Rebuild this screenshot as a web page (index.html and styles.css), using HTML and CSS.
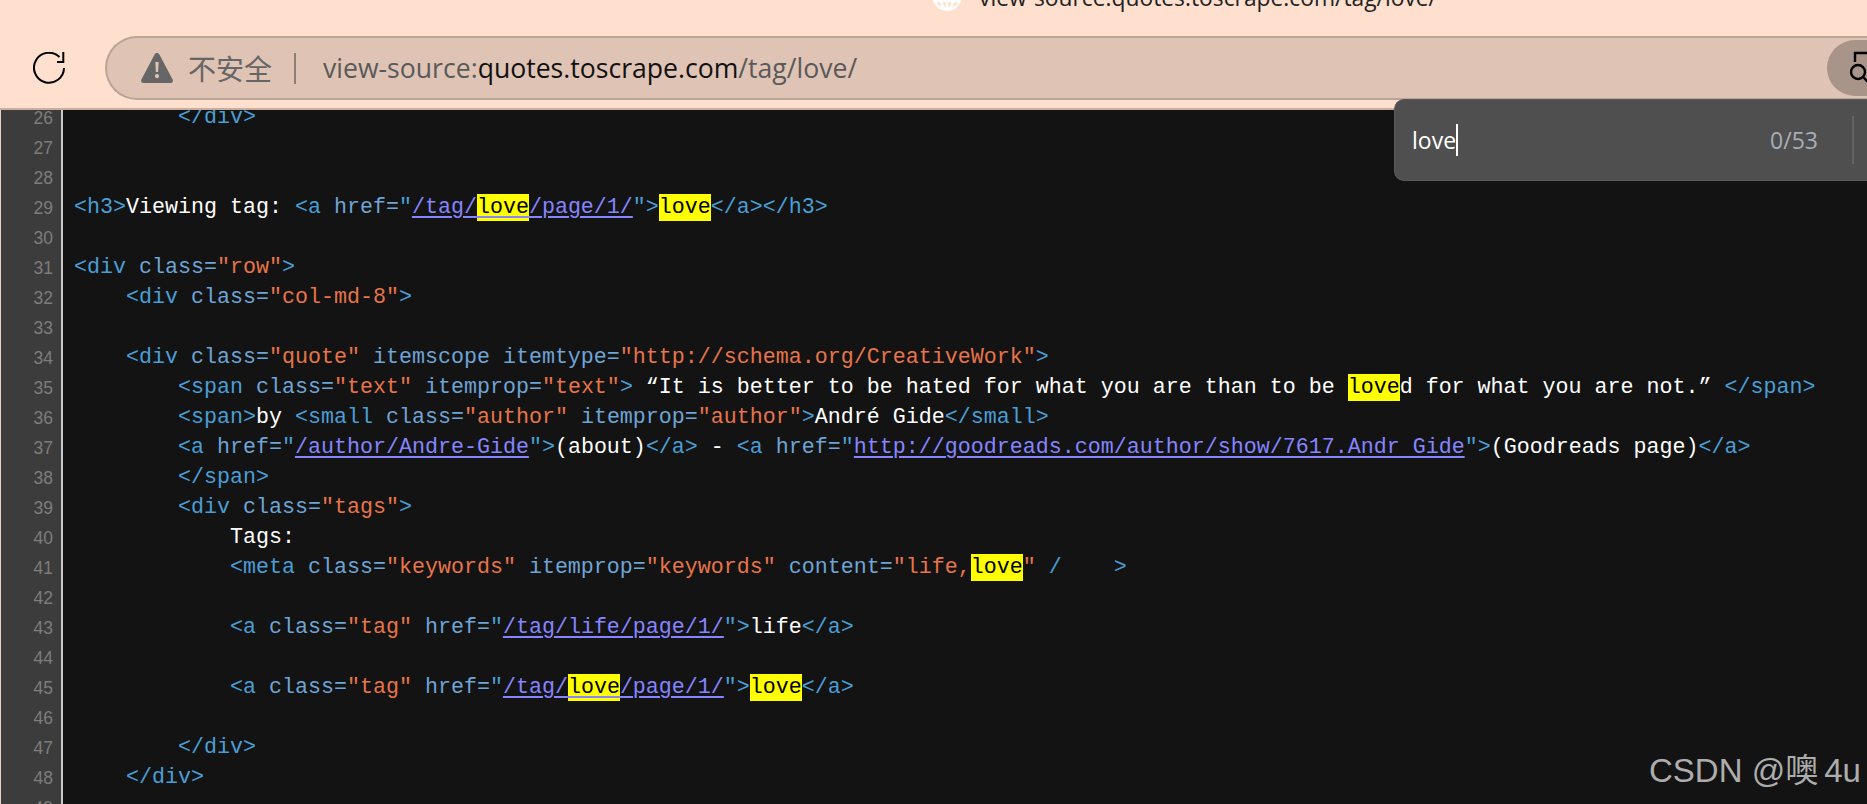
FILE: index.html
```html
<!DOCTYPE html>
<html lang="zh-CN">
<head>
<meta charset="utf-8">
<title>view-source:quotes.toscrape.com/tag/love/</title>
<link rel="stylesheet" href="styles.css">
</head>
<body>
<header class="chrome">
  <div class="tabline">
    <svg class="globe" viewBox="0 0 30 30" width="30" height="30" fill="none" stroke="#fff" stroke-width="2.4"><circle cx="15" cy="15" r="13.6"/><ellipse cx="15" cy="15" rx="6.5" ry="13.6"/><path d="M15 1v28M2 10h26M2 20h26"/></svg>
    <span class="tabtitle">view-source:quotes.toscrape.com/tag/love/</span>
  </div>
  <div class="toolbar">
    <svg class="reload" viewBox="0 0 32 32" width="32" height="32" fill="none" stroke="#000" stroke-width="2"><path d="M26.5 5A15 15 0 1 0 31 16"/><path d="M30.300 0v10H24"/></svg>
    <div class="omnibox">
      <svg class="warn" viewBox="0 0 32 30" width="32" height="30"><path fill="#666" fill-rule="evenodd" d="M16 0c1 0 1.800.5 2.400 1.500l13.200 25c.9 1.700-.1 3.500-2 3.500H2.400c-1.900 0-2.900-1.800-2-3.500L13.600 1.500C14.200.5 15 0 16 0zM14.300 9l.6 10h2.200l.6-10zM16 21a2.100 2.100 0 1 0 0 4.200 2.100 2.100 0 0 0 0-4.200z"/></svg>
      <span class="insecure">不安全</span>
      <span class="sep"></span>
      <span class="url">view-source:<b class="host">quotes.toscrape.com</b>/tag/love/</span>
      <span class="spacer"></span>
      <span class="findbtn">
        <svg viewBox="0 0 40 40" width="40" height="40" fill="none" stroke="#000" stroke-width="2.4"><path d="M6 14V5h24"/><circle cx="9" cy="24" r="7"/><path d="M14 29l6 6"/></svg>
      </span>
    </div>
  </div>
</header>
<main class="source">
<div class="lines">
<div class="row"><span class="ln">26</span><code class="src">        <i class="t">&lt;/div&gt;</i></code></div>
<div class="row"><span class="ln">27</span><code class="src"></code></div>
<div class="row"><span class="ln">28</span><code class="src"></code></div>
<div class="row"><span class="ln">29</span><code class="src"><i class="t">&lt;h3&gt;</i>Viewing tag: <i class="t">&lt;a </i><i class="a">href=</i><i class="t">"</i><a class="l">/tag/<mark>love</mark>/page/1/</a><i class="t">"&gt;</i><mark>love</mark><i class="t">&lt;/a&gt;&lt;/h3&gt;</i></code></div>
<div class="row"><span class="ln">30</span><code class="src"></code></div>
<div class="row"><span class="ln">31</span><code class="src"><i class="t">&lt;div </i><i class="a">class=</i><i class="v">"row"</i><i class="t">&gt;</i></code></div>
<div class="row"><span class="ln">32</span><code class="src">    <i class="t">&lt;div </i><i class="a">class=</i><i class="v">"col-md-8"</i><i class="t">&gt;</i></code></div>
<div class="row"><span class="ln">33</span><code class="src"></code></div>
<div class="row"><span class="ln">34</span><code class="src">    <i class="t">&lt;div </i><i class="a">class=</i><i class="v">"quote"</i><i class="a"> itemscope itemtype=</i><i class="v">"http://schema.org/CreativeWork"</i><i class="t">&gt;</i></code></div>
<div class="row"><span class="ln">35</span><code class="src">        <i class="t">&lt;span </i><i class="a">class=</i><i class="v">"text"</i><i class="a"> itemprop=</i><i class="v">"text"</i><i class="t">&gt;</i> “It is better to be hated for what you are than to be <mark>love</mark>d for what you are not.” <i class="t">&lt;/span&gt;</i></code></div>
<div class="row"><span class="ln">36</span><code class="src">        <i class="t">&lt;span&gt;</i>by <i class="t">&lt;small </i><i class="a">class=</i><i class="v">"author"</i><i class="a"> itemprop=</i><i class="v">"author"</i><i class="t">&gt;</i>André Gide<i class="t">&lt;/small&gt;</i></code></div>
<div class="row"><span class="ln">37</span><code class="src">        <i class="t">&lt;a </i><i class="a">href=</i><i class="t">"</i><a class="l">/author/Andre-Gide</a><i class="t">"&gt;</i>(about)<i class="t">&lt;/a&gt;</i> - <i class="t">&lt;a </i><i class="a">href=</i><i class="t">"</i><a class="l">http://goodreads.com/author/show/7617.Andr Gide</a><i class="t">"&gt;</i>(Goodreads page)<i class="t">&lt;/a&gt;</i></code></div>
<div class="row"><span class="ln">38</span><code class="src">        <i class="t">&lt;/span&gt;</i></code></div>
<div class="row"><span class="ln">39</span><code class="src">        <i class="t">&lt;div </i><i class="a">class=</i><i class="v">"tags"</i><i class="t">&gt;</i></code></div>
<div class="row"><span class="ln">40</span><code class="src">            Tags:</code></div>
<div class="row"><span class="ln">41</span><code class="src">            <i class="t">&lt;meta </i><i class="a">class=</i><i class="v">"keywords"</i><i class="a"> itemprop=</i><i class="v">"keywords"</i><i class="a"> content=</i><i class="v">"life,</i><mark>love</mark><i class="v">"</i><i class="t"> /    &gt;</i></code></div>
<div class="row"><span class="ln">42</span><code class="src"></code></div>
<div class="row"><span class="ln">43</span><code class="src">            <i class="t">&lt;a </i><i class="a">class=</i><i class="v">"tag"</i><i class="a"> href=</i><i class="t">"</i><a class="l">/tag/life/page/1/</a><i class="t">"&gt;</i>life<i class="t">&lt;/a&gt;</i></code></div>
<div class="row"><span class="ln">44</span><code class="src"></code></div>
<div class="row"><span class="ln">45</span><code class="src">            <i class="t">&lt;a </i><i class="a">class=</i><i class="v">"tag"</i><i class="a"> href=</i><i class="t">"</i><a class="l">/tag/<mark>love</mark>/page/1/</a><i class="t">"&gt;</i><mark>love</mark><i class="t">&lt;/a&gt;</i></code></div>
<div class="row"><span class="ln">46</span><code class="src"></code></div>
<div class="row"><span class="ln">47</span><code class="src">        <i class="t">&lt;/div&gt;</i></code></div>
<div class="row"><span class="ln">48</span><code class="src">    <i class="t">&lt;/div&gt;</i></code></div>
<div class="row"><span class="ln">49</span><code class="src"></code></div>
</div>
</main>
<div class="findbar">
  <span class="query">love</span><span class="caret"></span>
  <span class="count">0/53</span>
  <span class="finddiv"></span>
</div>
<div class="watermark">CSDN @<span class="wmcjk">噢</span>4u</div>
</body>
</html>
```
FILE: styles.css
```css
* { box-sizing: border-box; }
html, body { margin: 0; height: 100%; }
body {
  width: 1867px;
  height: 804px;
  overflow: hidden;
  background: #ffdfce;
  position: relative;
  font-family: "Open Sans", "Noto Sans CJK SC", sans-serif;
}
.chrome { height: 110px; display: flex; flex-direction: column; overflow: hidden; border-bottom: 2px solid #c9ae9f; }
.tabline { height: 36px; flex: none; display: flex; align-items: flex-end; gap: 17px; padding: 0 0 25px 932px; }
.globe { flex: none; }
.tabtitle { font-size: 22.8px; line-height: 30px; color: #222; white-space: nowrap; margin-bottom: -2px; }
.toolbar { display: flex; align-items: flex-start; padding-left: 33px; }
.reload { flex: none; margin: 16px 40px 0 0; }
.omnibox {
  flex: none;
  width: 1800px;
  height: 64px;
  background: #dfc3b4;
  border: 2px solid #b9a498;
  border-right: 0;
  border-radius: 32px 0 0 32px;
  display: flex;
  align-items: center;
  padding-left: 34px;
}
.warn { flex: none; margin-right: 15px; }
.insecure { font-size: 28px; color: #666; font-family: "Noto Sans CJK SC", sans-serif; line-height: 40px; }
.sep { width: 2px; height: 31px; background: #8f7d72; margin: 0 27px 0 22px; flex: none; }
.url { font-size: 26.6px; color: #5a5a5a; white-space: nowrap; }
.host { font-weight: 400; color: #111; }
.spacer { flex: 1; }
.findbtn { flex: none; width: 78px; height: 56px; border-radius: 28px 0 0 28px; background: #a89488; display: flex; align-items: center; padding-left: 22px; }

.source { height: 694px; background: #131313; overflow: hidden; border-left: 1px solid #e9cfc2; }
.lines { margin-top: -7px; }
.row { display: flex; height: 30px; line-height: 30px; }
.ln {
  flex: none;
  width: 62px;
  background: #3c3c3c;
  border-right: 2px solid #c9c9c9;
  padding-right: 8px;
  text-align: right;
  font: 17.5px/30px "Liberation Sans", sans-serif;
  color: #7c7c7c;
}
.src {
  padding-left: 11px;
  font: 21.67px/30px "Liberation Mono", monospace;
  color: #fff;
  white-space: pre;
}
.src i { font-style: normal; }
.t { color: #4a9ed6; }
.a { color: #6ea4d6; }
.v { color: #e7744a; }
.l { color: #8585ff; text-decoration: underline; text-decoration-thickness: 2px; text-underline-offset: 3px; }
mark { background: #ffff00; color: #000; padding: 1px 0; }

.findbar {
  position: absolute;
  left: 1394px;
  top: 99px;
  width: 473px;
  height: 82px;
  background: #4f4f4f;
  border: 1px solid #5a5a5a;
  border-right: 0;
  border-radius: 10px 0 0 10px;
  display: flex;
  align-items: center;
  padding-left: 17px;
  color: #fff;
}
.query { font-size: 23px; line-height: 32px; }
.caret { width: 2px; height: 32px; background: #fff; }
.count { font-size: 23px; color: #a6aeb6; margin-left: 312px; }
.finddiv { width: 2px; height: 48px; background: #636363; margin-left: 34px; }
.watermark {
  position: absolute;
  left: 1649px;
  top: 752px;
  font: 33px/38px "Liberation Sans", "Noto Sans CJK SC", sans-serif;
  color: #adadad;
  white-space: nowrap;
}
.wmcjk { margin-right: 6px; }
```
